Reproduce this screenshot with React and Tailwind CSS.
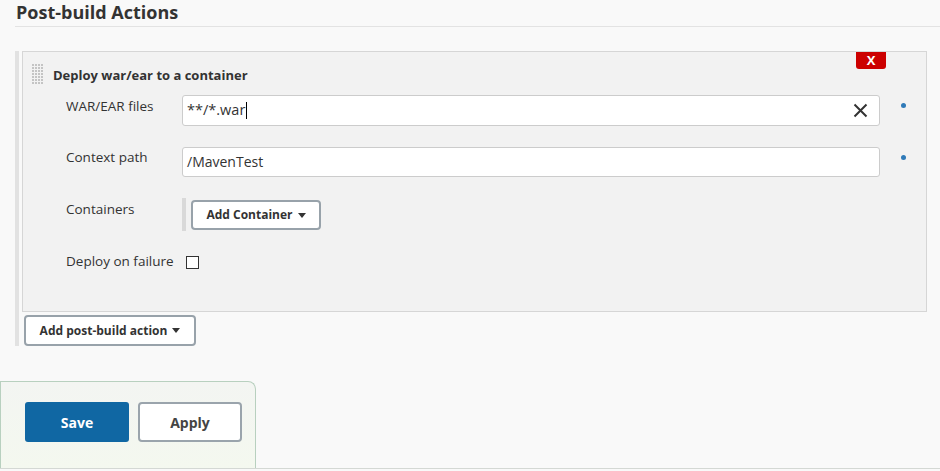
import React from "react";

function Caret() {
  return (
    <svg width="8" height="5" viewBox="0 0 8 5" className="ml-[5px] inline-block">
      <path d="M0 0H8L4 5Z" fill="#333" />
    </svg>
  );
}

function Handle() {
  const dots = [];
  for (let r = 0; r < 7; r++) {
    for (let c = 0; c < 4; c++) {
      dots.push(<rect key={r + "-" + c} x={c * 3} y={r * 3} width="2" height="2" fill="#c4c4c4" />);
    }
  }
  return (
    <svg width="12" height="21" viewBox="0 0 12 21" className="shrink-0">
      {dots}
    </svg>
  );
}

function Dot() {
  return <div className="w-[5px] h-[5px] rounded-full bg-[#2f7ab8] ml-[21px] mt-[8px] shrink-0" />;
}

export default function App() {
  return (
    <div className="w-[940px] h-[471px] bg-[#f9f9f9] overflow-hidden font-['Open_Sans',sans-serif] text-[#333]">
      <div className="pl-[15px]">
        <h2 className="h-[27px] border-b border-[#e3e3e3] pl-[1px] text-[18px] font-bold leading-[24px] text-[#333]">
          Post-build Actions
        </h2>
      </div>

      <div className="ml-[15px] mt-[24px] flex">
        <div className="w-[4px] h-[295px] bg-[#e2e2e2] shrink-0" />
        <div className="flex flex-col">
          <div className="relative ml-[3px] w-[905px] h-[261px] bg-[#f2f2f2] border border-[#d6d6d6]">
            <div className="absolute top-0 right-[40px] w-[30px] h-[17px] bg-[#cc0000] rounded-b-[3px] flex items-center justify-center text-white text-[13px] font-bold leading-none">
              X
            </div>
            <div className="flex items-center pl-[9px] pt-[12px]">
              <Handle />
              <span className="ml-[9px] text-[13px] font-bold leading-[20px] text-[#333]">
                Deploy war/ear to a container
              </span>
            </div>

            <div className="pl-[43px] mt-[10px]">
              <div className="flex items-start">
                <div className="w-[116px] pt-[1px] text-[13.5px] leading-[20px] text-[#333]">WAR/EAR files</div>
                <div className="w-[698px] h-[31px] bg-white border border-[#cccccc] rounded-[3px] flex items-center pl-[4px] pr-[11px]">
                  <span className="text-[14.5px] text-[#333] leading-none">**/*.war</span>
                  <span className="w-[1px] h-[17px] bg-black ml-[1px]" />
                  <div className="flex-1" />
                  <svg width="15" height="15" viewBox="0 0 15 15">
                    <path d="M1.5 1.5L13.5 13.5M13.5 1.5L1.5 13.5" stroke="#333" strokeWidth="2" />
                  </svg>
                </div>
                <Dot />
              </div>

              <div className="flex items-start mt-[21px]">
                <div className="w-[116px] text-[13.5px] leading-[20px] text-[#333]">Context path</div>
                <div className="w-[698px] h-[30px] bg-white border border-[#cccccc] rounded-[3px] flex items-center pl-[4px]">
                  <span className="text-[14px] text-[#333] leading-none">/MavenTest</span>
                </div>
                <Dot />
              </div>

              <div className="flex items-start mt-[21px]">
                <div className="w-[116px] pt-[1px] text-[13.5px] leading-[20px] text-[#333]">Containers</div>
                <div className="w-[4px] h-[33px] bg-[#d9d9d9]" />
                <button className="ml-[5px] mt-[2px] w-[130px] h-[30px] bg-white border-2 border-[#98a2aa] rounded-[4px] flex items-center justify-center text-[12px] font-bold text-[#333]">
                  Add Container
                  <Caret />
                </button>
              </div>

              <div className="flex items-center mt-[20px]">
                <div className="w-[120px] text-[13.5px] leading-[20px] text-[#333]">Deploy on failure</div>
                <div className="w-[13px] h-[13px] bg-white border border-[#333] mt-[3px]" />
              </div>
            </div>
          </div>
          <button className="ml-[5px] mt-[3px] w-[172px] h-[31px] bg-white border-2 border-[#98a2aa] rounded-[4px] flex items-center justify-center text-[12px] font-bold text-[#333]">
            Add post-build action
            <Caret />
          </button>
        </div>
      </div>

      <div className="mt-[35px] w-[256px] h-[87px] border border-b-0 border-[#b8d0bf] rounded-tr-[8px] bg-gradient-to-b from-[#f3f5f2] to-[#f4f8ef] flex gap-[9px] pl-[24px] pt-[20px]">
        <button className="w-[104px] h-[40px] bg-[#1067a3] rounded-[3px] text-white text-[14px] font-bold">Save</button>
        <button className="w-[104px] h-[40px] bg-white border-2 border-[#9aa4ac] rounded-[4px] text-[#444] text-[14px] font-bold">Apply</button>
      </div>
      <div className="h-[1px] bg-[#d4d8d4]" />
    </div>
  );
}
